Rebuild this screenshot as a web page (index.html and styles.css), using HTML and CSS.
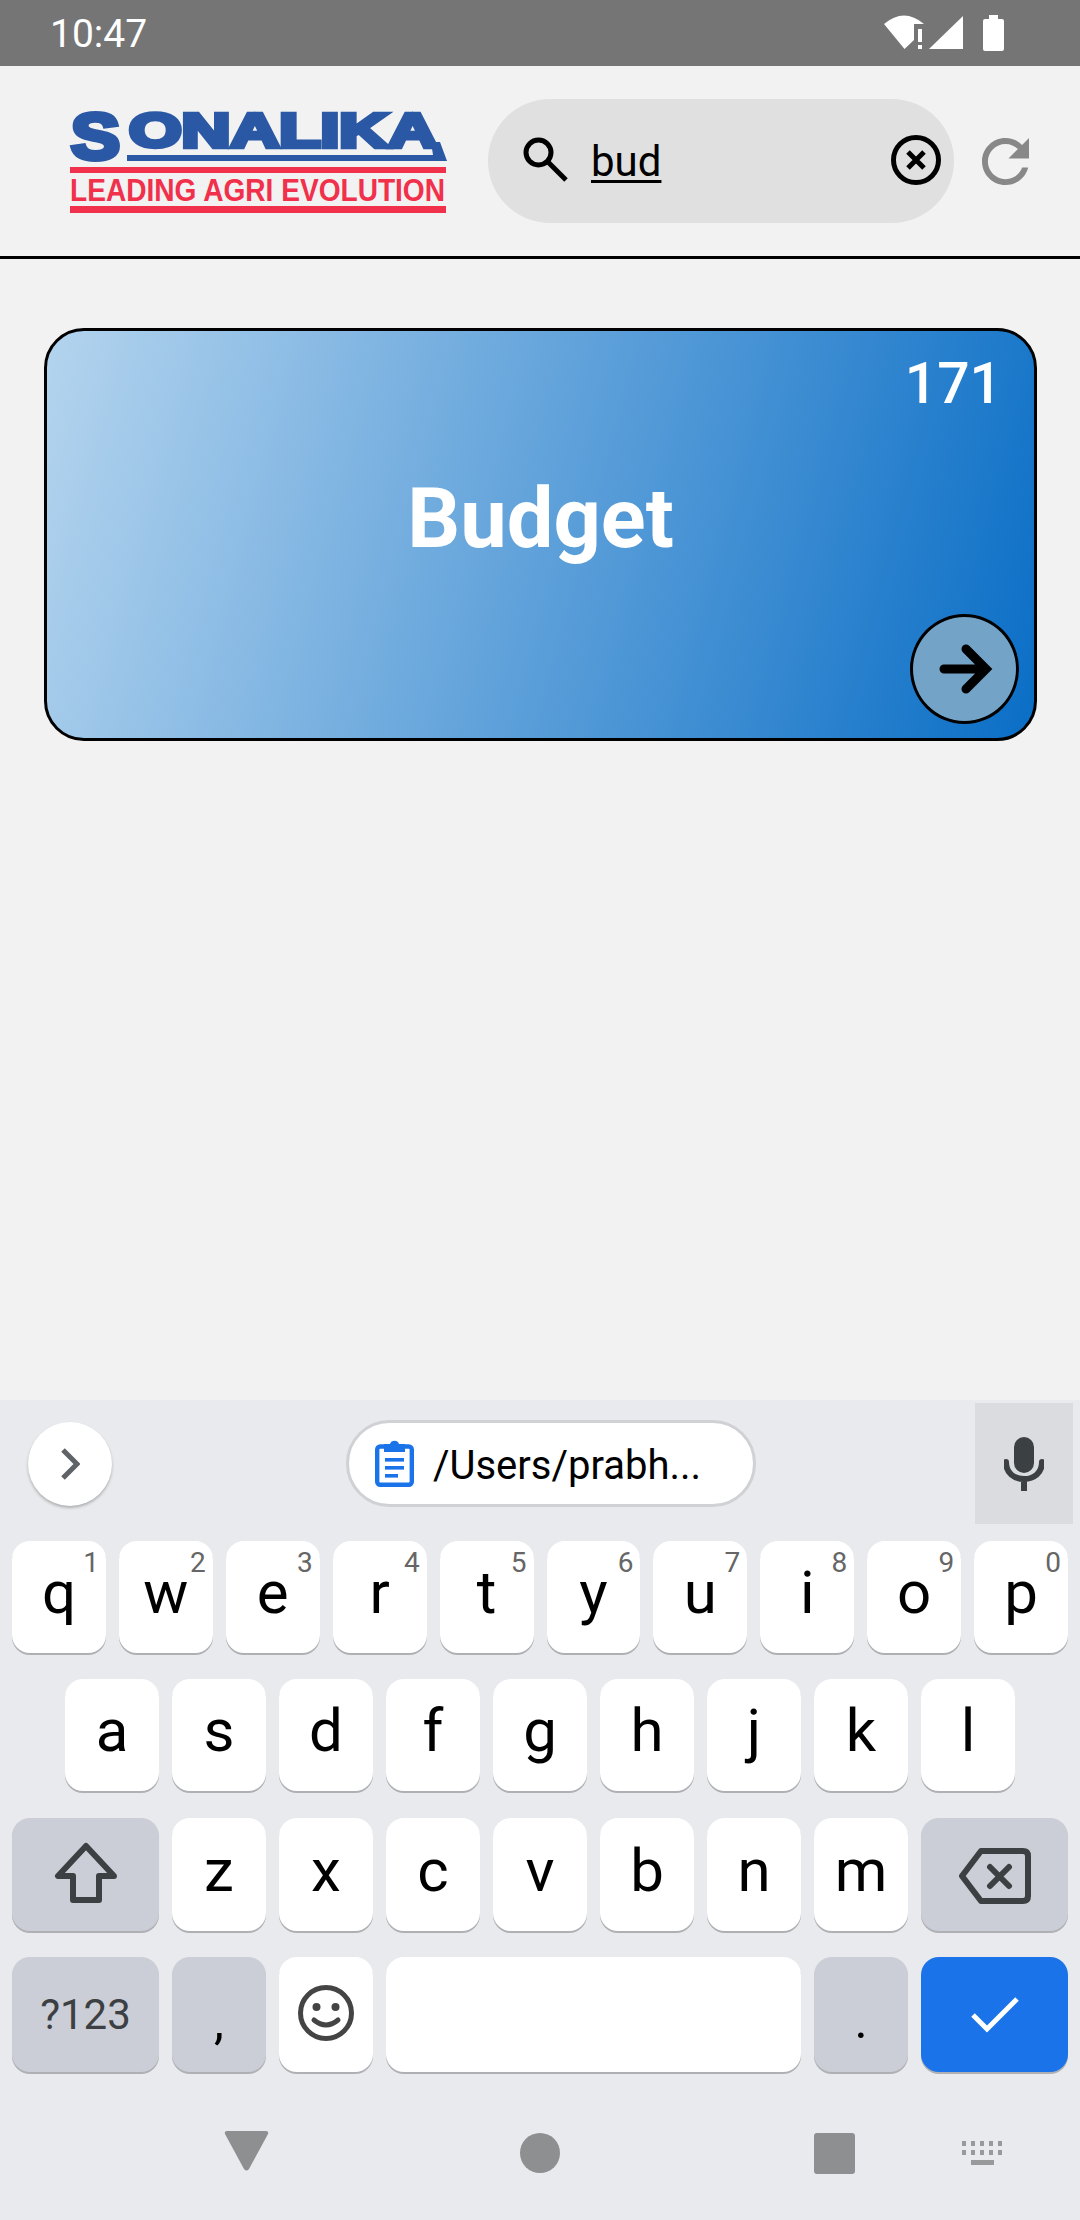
FILE: index.html
```html
<!DOCTYPE html>
<html lang="en">
<head>
<meta charset="utf-8">
<title>Sonalika search</title>
<link rel="stylesheet" href="styles.css">
</head>
<body>
<div class="status">
  <span class="time">10:47</span>
  <svg class="status-icons" width="120" height="36" viewBox="0 0 120 36">
    <path class="w" d="M20.5 34 L0 9 Q20 -8 40 9 H30 V25 Z"/>
    <rect class="w" x="34" y="14" width="4" height="13"/>
    <rect class="w" x="34" y="30" width="4" height="4"/>
    <path class="w" d="M45 34 L79 1 V34 Z"/>
    <path class="w" d="M105 0 H114 V4 H118 Q120 4 120 6 V34 Q120 36 118 36 H101 Q99 36 99 34 V6 Q99 4 101 4 H105 Z"/>
  </svg>
</div>
<header class="header">
  <svg class="logo" width="430" height="134" viewBox="-8 -16 430 134">
    <text class="logo-s" x="2" y="47" textLength="49" lengthAdjust="spacingAndGlyphs">S</text>
    <text class="logo-name" x="60" y="35" textLength="308" lengthAdjust="spacingAndGlyphs">ONALIKA</text>
    <path class="logo-blue" d="M362 30 H371 L378 49 H58 V43 H364 Z"/>
    <rect class="logo-red" x="1" y="55" width="376" height="6"/>
    <text class="logo-tag" x="1" y="88.500" textLength="375" lengthAdjust="spacingAndGlyphs">LEADING AGRI EVOLUTION</text>
    <rect class="logo-red" x="1" y="94" width="376" height="7"/>
  </svg>
  <div class="search">
    <svg class="search-icon" width="46" height="46" viewBox="0 0 46 46">
      <circle class="stroke-black" cx="15.500" cy="15.500" r="12.500"/>
      <line class="stroke-black" x1="25" y1="25" x2="43" y2="43"/>
    </svg>
    <span class="query">bud</span>
    <svg class="clear-icon" width="50" height="50" viewBox="0 0 50 50">
      <circle class="stroke-black" cx="25" cy="25" r="22.500"/>
      <path class="stroke-black" d="M17 17 L33 33 M33 17 L17 33"/>
    </svg>
  </div>
  <svg class="refresh" width="47" height="47" viewBox="4 4 16 16">
    <path d="M17.65 6.35C16.2 4.9 14.21 4 12 4c-4.42 0-7.99 3.58-7.99 8s3.57 8 7.99 8c3.73 0 6.84-2.55 7.73-6h-2.08c-.82 2.33-3.04 4-5.65 4-3.31 0-6-2.69-6-6s2.69-6 6-6c1.66 0 3.14.69 4.22 1.78L13 11h7V4l-2.35 2.35z"/>
  </svg>
</header>
<main class="main">
  <section class="card">
    <div class="count">171</div>
    <div class="title">Budget</div>
    <div class="go">
      <svg width="58" height="52" viewBox="0 0 58 52">
        <path class="arrow" d="M8 26 H50 M30 6 L50 26 L30 46"/>
      </svg>
    </div>
  </section>
</main>
<div class="keyboard">
  <div class="strip">
    <div class="chev">
      <svg width="20" height="32" viewBox="0 0 20 32"><path class="chev-line" d="M3 2 L17 16 L3 30"/></svg>
    </div>
    <div class="chip">
      <svg width="39" height="47" viewBox="0 0 39 47">
        <rect class="clip-body" x="2.200" y="6.500" width="34.600" height="38.300" rx="3"/>
        <path class="clip-fill" d="M9 4 H15 A4.800 4.800 0 0 1 24 4 H30 V12 H9 Z"/>
        <rect class="clip-fill" x="10" y="18" width="19" height="3.600"/>
        <rect class="clip-fill" x="10" y="26" width="19" height="3.600"/>
        <rect class="clip-fill" x="10" y="34" width="13" height="3.600"/>
      </svg>
      <span class="chip-text">/Users/prabh...</span>
    </div>
    <div class="mic">
      <svg width="40" height="54" viewBox="0 0 40 54">
        <rect class="dark-fill" x="10" y="0" width="20" height="36" rx="10"/>
        <path class="dark-line" d="M2 25 C2 36 10 42 20 42 C30 42 38 36 38 25 M20 42 V54"/>
      </svg>
    </div>
  </div>
  <div class="row row-top">
    <div class="key"><span class="num">1</span>q</div>
    <div class="key"><span class="num">2</span>w</div>
    <div class="key"><span class="num">3</span>e</div>
    <div class="key"><span class="num">4</span>r</div>
    <div class="key"><span class="num">5</span>t</div>
    <div class="key"><span class="num">6</span>y</div>
    <div class="key"><span class="num">7</span>u</div>
    <div class="key"><span class="num">8</span>i</div>
    <div class="key"><span class="num">9</span>o</div>
    <div class="key"><span class="num">0</span>p</div>
  </div>
  <div class="row row-home">
    <div class="key">a</div>
    <div class="key">s</div>
    <div class="key">d</div>
    <div class="key">f</div>
    <div class="key">g</div>
    <div class="key">h</div>
    <div class="key">j</div>
    <div class="key">k</div>
    <div class="key">l</div>
  </div>
  <div class="row row-low">
    <div class="key wide fn shift-key">
      <svg width="64" height="62" viewBox="0 0 64 62">
        <path class="dark-line" d="M32 4 L4 34 H19 V58 H45 V34 H60 Z"/>
      </svg>
    </div>
    <div class="key">z</div>
    <div class="key">x</div>
    <div class="key">c</div>
    <div class="key">v</div>
    <div class="key">b</div>
    <div class="key">n</div>
    <div class="key">m</div>
    <div class="key wide fn back-key">
      <svg width="72" height="56" viewBox="0 0 72 56">
        <path class="dark-line" d="M22 3 H64 Q69 3 69 8 V48 Q69 53 64 53 H22 L3 28 Z M31 19 L50 38 M50 19 L31 38"/>
      </svg>
    </div>
  </div>
  <div class="row row-bottom">
    <div class="key wide fn sym">?123</div>
    <div class="key fn punct">,</div>
    <div class="key emoji-key">
      <svg width="56" height="56" viewBox="0 0 56 56">
        <circle class="face" cx="28" cy="28" r="25.500"/>
        <circle class="eye" cx="18.500" cy="22" r="4"/>
        <circle class="eye" cx="37.500" cy="22" r="4"/>
        <path class="face" d="M16 35 Q28 45 40 35"/>
      </svg>
    </div>
    <div class="key space"></div>
    <div class="key fn punct">.</div>
    <div class="key wide done">
      <svg width="50" height="38" viewBox="0 0 50 38"><path class="tick" d="M3 19 L17 33 L47 3"/></svg>
    </div>
  </div>
  <nav class="nav">
    <svg class="nav-back" width="45" height="40" viewBox="0 0 45 40"><path class="nav-fill" d="M3 0 H42 Q45 0 44 3 L25 38 Q22.500 41 20 38 L1 3 Q0 0 3 0 Z"/></svg>
    <svg class="nav-home" width="40" height="40" viewBox="0 0 40 40"><circle class="nav-fill" cx="20" cy="20" r="20"/></svg>
    <svg class="nav-recent" width="41" height="41" viewBox="0 0 41 41"><rect class="nav-fill" width="41" height="41" rx="3"/></svg>
    <svg class="nav-kbd" width="43" height="24" viewBox="0 0 43 24">
      <path class="nav-dots" d="M0 0h4v5h-4zM9 0h4v5h-4zM18 0h4v5h-4zM27 0h4v5h-4zM36 0h4v5h-4zM0 9h4v5h-4zM9 9h4v5h-4zM18 9h4v5h-4zM27 9h4v5h-4zM36 9h4v5h-4zM9 19h23v5h-23z"/>
    </svg>
  </nav>
</div>
</body>
</html>
```
FILE: styles.css
```css
* { box-sizing: border-box; }
html, body { margin: 0; padding: 0; }
body {
  width: 1080px;
  height: 2220px;
  overflow: hidden;
  display: flex;
  flex-direction: column;
  background: #f2f2f2;
  font-family: Roboto, "Liberation Sans", sans-serif;
  color: #000;
}
svg { display: block; flex: none; }

/* status bar */
.status {
  height: 66px;
  flex: none;
  background: #757575;
  display: flex;
  align-items: center;
  justify-content: space-between;
  padding: 0 76px 0 50px;
}
.time { color: #fff; font-size: 39px; line-height: 66px; padding-top: 1px; }
.w { fill: #fff; }

/* header */
.header {
  height: 193px;
  flex: none;
  display: flex;
  align-items: center;
  padding-left: 61px;
  border-bottom: 3px solid #000;
}
.logo { margin: 4px -3px 0 0; }
.logo-s { font: 700 64px "Liberation Sans", sans-serif; fill: #2a58a5; stroke: #2a58a5; stroke-width: 5px; }
.logo-name { font: 700 49px "Liberation Sans", sans-serif; fill: #2a58a5; stroke: #2a58a5; stroke-width: 4.500px; }
.logo-blue { fill: #2a58a5; }
.logo-red { fill: #f1304b; }
.logo-tag { font: 700 32px "Liberation Sans", sans-serif; fill: #f1304b; }
.search {
  width: 466px;
  height: 124px;
  border-radius: 62px;
  background: #e0e0e0;
  display: flex;
  align-items: center;
  padding: 0 13px 0 35px;
}
.search-icon { margin-bottom: 2px; }
.stroke-black { fill: none; stroke: #000; stroke-width: 5px; }
.query { margin-left: 22px; font-size: 42px; text-decoration: underline; text-decoration-thickness: 3px; text-underline-offset: 4px; }
.clear-icon { margin: 0 0 2px auto; }
.refresh { margin-left: 28px; fill: #888; }

/* card */
.main { flex: 1; padding: 69px 43px 0 44px; }
.card {
  height: 413px;
  border: 3px solid #000;
  border-radius: 40px;
  background: linear-gradient(105deg, #b4d4ee 0%, #0a6ec6 100%);
  display: flex;
  flex-direction: column;
  padding: 21px 15px 14px;
  color: #fff;
}
.count { font-size: 57px; font-weight: 500; line-height: 64px; text-align: right; padding-right: 17px; }
.title { font-size: 83px; font-weight: 700; line-height: 96px; text-align: center; margin-top: 55px; }
.go {
  width: 109px;
  height: 110px;
  margin: 47px 0 0 auto;
  border: 3px solid #000;
  border-radius: 50%;
  background: #73a3c7;
  display: flex;
  align-items: center;
  justify-content: center;
}
.arrow { fill: none; stroke: #000; stroke-width: 9px; stroke-linecap: round; stroke-linejoin: miter; }

/* keyboard */
.keyboard { height: 820px; flex: none; background: #e8eaed; padding-top: 3px; }
.strip { height: 121px; display: flex; align-items: center; margin-bottom: 17px; padding-right: 7px; }
.chev {
  width: 84px;
  height: 84px;
  margin-left: 28px;
  border-radius: 50%;
  background: #fff;
  box-shadow: 0 2px 3px rgba(0,0,0,.25);
  display: flex;
  align-items: center;
  justify-content: center;
}
.chev-line { fill: none; stroke: #5f6368; stroke-width: 5px; }
.chip {
  width: 410px;
  height: 87px;
  margin-left: 234px;
  border: 3px solid #d0d1d4;
  border-radius: 44px;
  background: #fff;
  display: flex;
  align-items: center;
  padding-left: 26px;
}
.clip-body { fill: none; stroke: #1a73e8; stroke-width: 4.400px; }
.clip-fill { fill: #1a73e8; }
.chip-text { margin-left: 19px; font-size: 40px; padding-top: 3px; }
.mic { width: 98px; height: 121px; margin-left: auto; background: #dadce0; display: flex; align-items: center; justify-content: center; }
.dark-fill { fill: #3c4043; }
.dark-line { fill: none; stroke: #3c4043; stroke-width: 6px; stroke-linejoin: round; stroke-linecap: round; }

.row { display: flex; gap: 13px; height: 112px; padding: 0 12px; }
.row-home { margin-top: 26px; padding: 0 65px; }
.row-low { margin-top: 27px; height: 113px; }
.row-bottom { margin-top: 26px; height: 115px; }
.key {
  position: relative;
  flex: 0 0 94px;
  border-radius: 18px;
  background: #fff;
  box-shadow: 0 2px 0 #aeb0b4;
  display: flex;
  align-items: center;
  justify-content: center;
  font-size: 60px;
  line-height: 1;
  padding-bottom: 8px;
}
.row-top .key { flex: 1; }
.wide { flex: 0 0 147px; padding: 0; }
.fn { background: #cbced6; }
.space { flex: 1; }
.done { background: #1a73e8; }
.shift-key { padding-bottom: 3px; }
.back-key { padding: 3px 0 0; }
.emoji-key { padding: 0 0 3px; }
.num { position: absolute; top: 10px; right: 7px; font-size: 28px; line-height: 24px; color: #666; }
.sym { font-size: 42px; color: #3c4043; }
.punct { font-size: 50px; padding: 13px 0 0; }
.face { fill: none; stroke: #444; stroke-width: 5px; stroke-linecap: round; }
.eye { fill: #444; }
.tick { fill: none; stroke: #fff; stroke-width: 5px; }

/* navigation */
.nav { display: flex; align-items: center; height: 148px; padding: 14px 0 0 224px; }
.nav-fill { fill: #8e8f91; }
.nav-dots { fill: #98999b; }
.nav-back { margin-bottom: 4px; }
.nav-home { margin-left: 251px; }
.nav-recent { margin-left: 254px; }
.nav-kbd { margin-left: 107px; }
```
